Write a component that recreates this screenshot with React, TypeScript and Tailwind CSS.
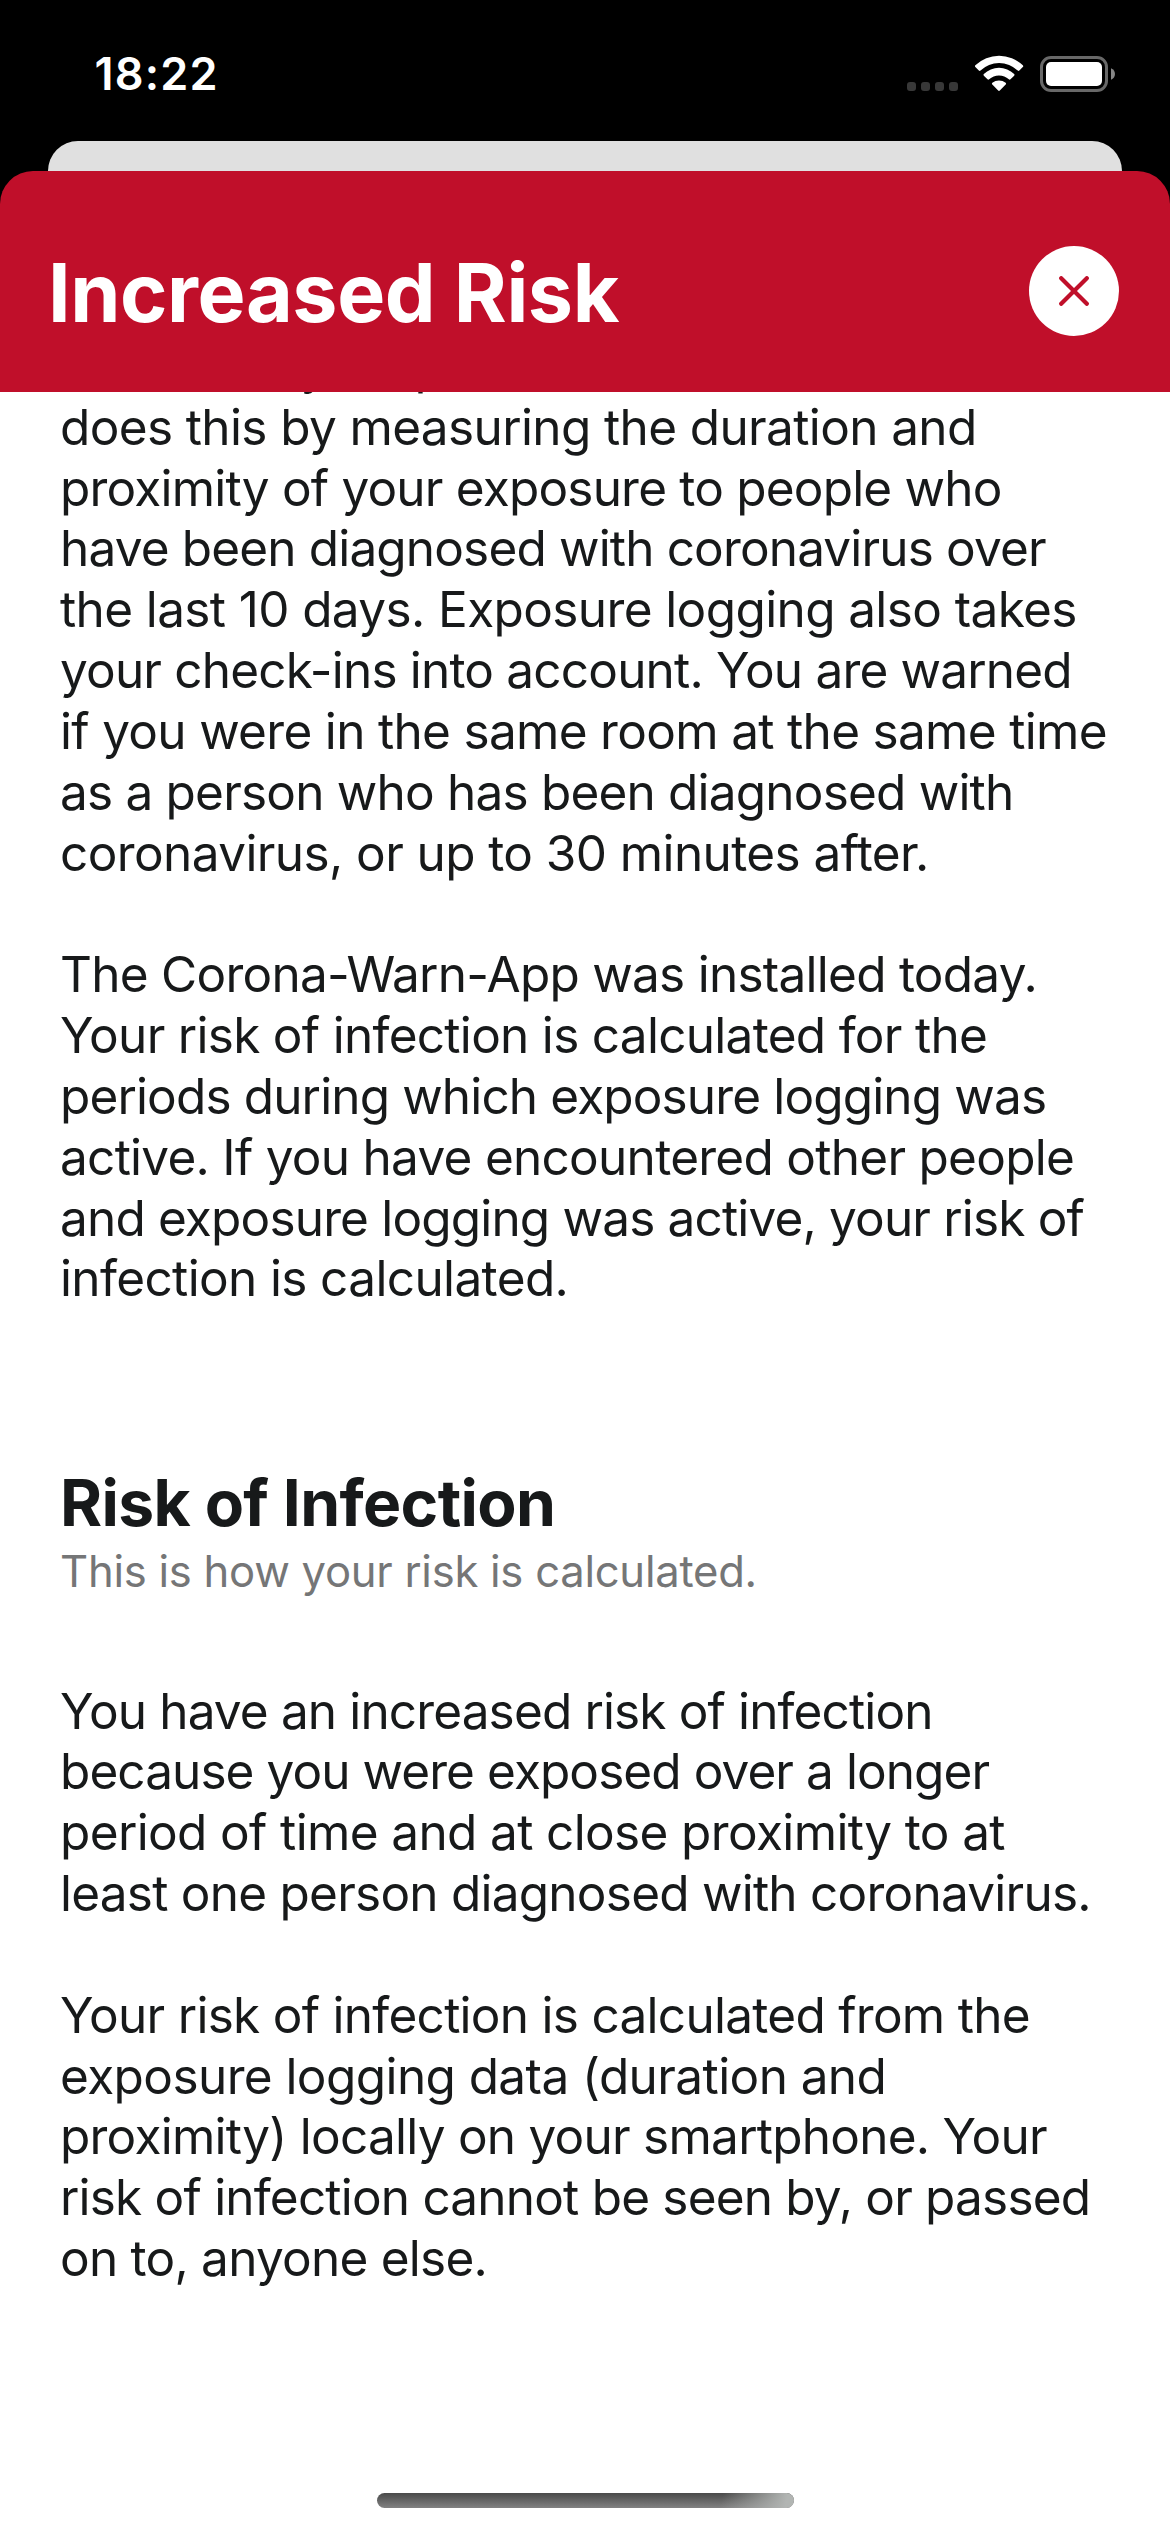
type Line = { text: string; className: string };

const exposureText: Line[] = [
  { text: "calculates your personal risk. It", className: "tracking-[-0.9px]" },
  { text: "does this by measuring the duration and", className: "tracking-[-0.622px]" },
  { text: "proximity of your exposure to people who", className: "tracking-[-0.803px]" },
  { text: "have been diagnosed with coronavirus over", className: "tracking-[-0.84px]" },
  { text: "the last 10 days. Exposure logging also takes", className: "tracking-[-0.615px]" },
  { text: "your check-ins into account. You are warned", className: "tracking-[-0.811px]" },
  { text: "if you were in the same room at the same time", className: "tracking-[-0.682px]" },
  { text: "as a person who has been diagnosed with", className: "tracking-[-0.798px]" },
  { text: "coronavirus, or up to 30 minutes after.", className: "tracking-[-0.594px]" },
];

const installText: Line[] = [
  { text: "The Corona-Warn-App was installed today.", className: "tracking-[-0.743px]" },
  { text: "Your risk of infection is calculated for the", className: "tracking-[-0.707px]" },
  { text: "periods during which exposure logging was", className: "tracking-[-0.86px]" },
  { text: "active. If you have encountered other people", className: "tracking-[-0.724px]" },
  { text: "and exposure logging was active, your risk of", className: "tracking-[-0.83px]" },
  { text: "infection is calculated.", className: "tracking-[-0.63px]" },
];

const reasonText: Line[] = [
  { text: "You have an increased risk of infection", className: "tracking-[-0.859px]" },
  { text: "because you were exposed over a longer", className: "tracking-[-0.92px]" },
  { text: "period of time and at close proximity to at", className: "tracking-[-0.63px]" },
  { text: "least one person diagnosed with coronavirus.", className: "tracking-[-0.759px]" },
];

const privacyText: Line[] = [
  { text: "Your risk of infection is calculated from the", className: "tracking-[-0.72px]" },
  { text: "exposure logging data (duration and", className: "tracking-[-0.588px]" },
  { text: "proximity) locally on your smartphone. Your", className: "tracking-[-0.752px]" },
  { text: "risk of infection cannot be seen by, or passed", className: "tracking-[-0.801px]" },
  { text: "on to, anyone else.", className: "tracking-[-0.757px]" },
];

function Paragraph({ lines }: { lines: Line[] }) {
  return (
    <p className="text-[49.5px] leading-[60.83px] whitespace-nowrap">
      {lines.map((line) => (
        <span key={line.text} className={`block ${line.className}`}>
          {line.text}
        </span>
      ))}
    </p>
  );
}

function WifiIcon() {
  return (
    <svg className="mt-[55px] ml-[17px] h-[36px] w-[48.33px] shrink-0" viewBox="315 75 145 108" fill="#fff">
      <path d="M316 106A102 102 0 0 1 458.500 106Q461 108.500 458.500 111L448 121.500Q445.500 124 443 121.500A80 80 0 0 0 331.500 121.500Q329 124 326.500 121.500L316 111Q313.500 108.500 316 106Z" />
      <path d="M341.500 132A65 65 0 0 1 432.500 132Q435 134.500 432.500 137L421.500 148Q419 150.500 416.500 148A43 43 0 0 0 357.500 148Q355 150.500 352.500 148L341.500 137Q339 134.500 341.500 132Z" />
      <path d="M367 158.500A31 31 0 0 1 407 158.500Q409.500 161 407 163.500L389.500 181.500Q387 184 384.500 181.500L367 163.500Q364.500 161 367 158.500Z" />
    </svg>
  );
}

function BatteryIcon() {
  return (
    <svg className="mt-[56px] ml-[16.500px] h-[36px] w-[75px] shrink-0" viewBox="0 0 75 36">
      <rect x="1.500" y="1.500" width="65" height="33" rx="9.500" fill="none" stroke="#686868" strokeWidth="3" />
      <rect x="6" y="6" width="56" height="24" rx="5" fill="#fff" />
      <path d="M71 12.300C73.500 13.300 75 15.500 75 18C75 20.500 73.500 22.700 71 23.700Z" fill="#868686" />
    </svg>
  );
}

export default function App() {
  return (
    <div className="flex h-[2532px] w-[1170px] flex-col overflow-hidden bg-black font-['Inter',sans-serif] text-[#17191a]">
      <div className="flex h-[141px] shrink-0 items-start">
        <div className="mt-[47px] ml-[94.500px] text-[45px] leading-[54px] font-semibold tracking-[1.2px] text-white">18:22</div>
        <div className="mt-[82px] ml-auto flex gap-[5px]">
          <div className="size-[9px] rounded-[3px] bg-[#383838]" />
          <div className="size-[9px] rounded-[3px] bg-[#383838]" />
          <div className="size-[9px] rounded-[3px] bg-[#383838]" />
          <div className="size-[9px] rounded-[3px] bg-[#383838]" />
        </div>
        <WifiIcon />
        <BatteryIcon />
        <div className="w-[55px] shrink-0" />
      </div>

      <div className="mx-12 h-[30px] shrink-0 rounded-t-[30px] bg-[#e0e0e0]" />

      <header className="flex h-[221px] shrink-0 items-start justify-between rounded-t-[33px] bg-[#c00f2a] pt-[75px] pr-[51px] pl-12">
        <h1 className="text-[80.7px] leading-[94px] font-bold tracking-[-0.43px] text-white">Increased Risk</h1>
        <button aria-label="Close" className="flex size-[90px] items-center justify-center rounded-full bg-white">
          <svg className="size-[30px]" viewBox="0 0 30 30" fill="none" stroke="#c00f2a" strokeWidth="4.200" strokeLinecap="round">
            <path d="M2.200 2.200L27.800 27.800M27.800 2.200L2.200 27.800" />
          </svg>
        </button>
      </header>

      <main className="relative flex min-h-0 flex-1 flex-col overflow-hidden bg-white">
        <div className="-mt-14 flex flex-col px-[60px]">
          <div className="flex flex-col gap-[60.83px]">
            <Paragraph lines={exposureText} />
            <Paragraph lines={installText} />
          </div>
          <h2 className="mt-[153.300px] text-[64.200px] leading-[80px] font-bold tracking-[-0.654px]">Risk of Infection</h2>
          <p className="mt-px text-[43.600px] leading-[56px] tracking-[-0.257px] text-[#757677]">
            This is how your risk is calculated.
          </p>
          <div className="mt-[81px] flex flex-col gap-[60.83px]">
            <Paragraph lines={reasonText} />
            <Paragraph lines={privacyText} />
          </div>
        </div>
        <div className="absolute bottom-6 left-[377px] h-[15px] w-[417px] overflow-hidden rounded-full bg-linear-to-b from-[#4a4a4a] to-[#828282]">
          <div className="ml-auto h-full w-[84px] bg-linear-[100deg] from-transparent from-15% to-[#b2b5b3] to-90%" />
        </div>
      </main>
    </div>
  );
}
